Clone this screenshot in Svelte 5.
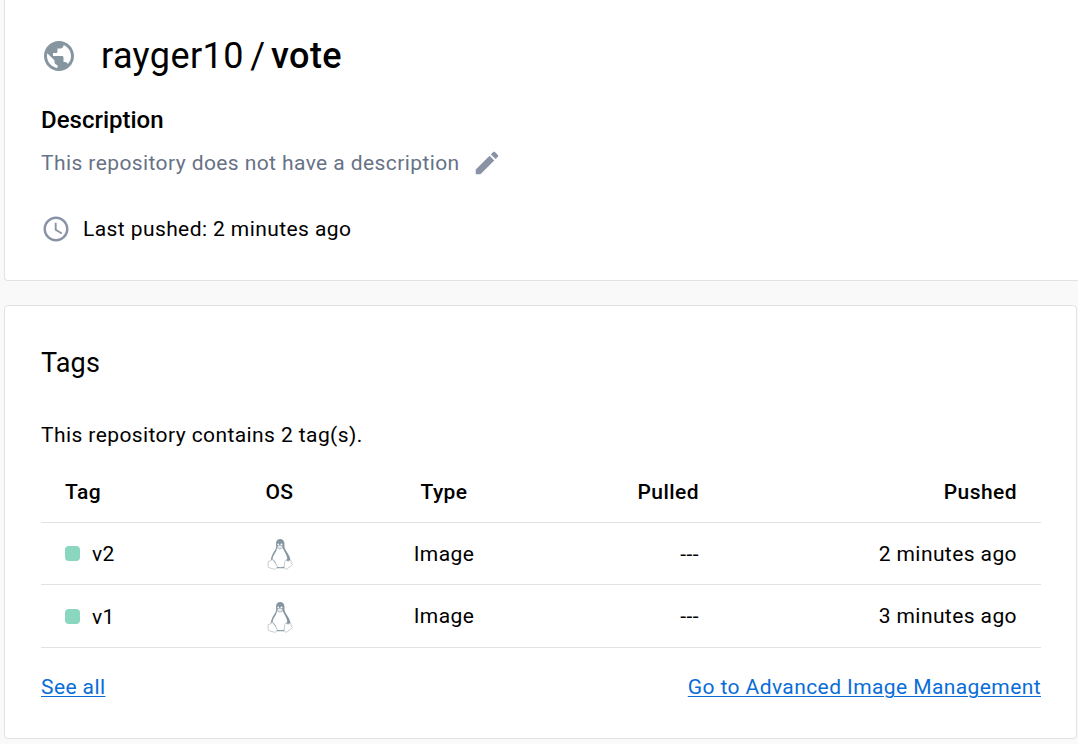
<script>
  const tags = [
    { name: 'v2', type: 'Image', pulled: '---', pushed: '2 minutes ago' },
    { name: 'v1', type: 'Image', pulled: '---', pushed: '3 minutes ago' }
  ];
</script>

<main>
  <section class="card summary">
    <h1>
      <svg class="globe" viewBox="0 0 24 24"><path d="M12 2C6.48 2 2 6.48 2 12s4.480 10 10 10 10-4.480 10-10S17.520 2 12 2zm-1 17.930c-3.950-.49-7-3.850-7-7.930 0-.62.08-1.210.21-1.790L9 15v1c0 1.100.9 2 2 2v1.930zm6.900-2.540c-.26-.81-1-1.390-1.900-1.390h-1v-3c0-.55-.45-1-1-1H8v-2h2c.55 0 1-.45 1-1V7h2c1.100 0 2-.9 2-2v-.41c2.930 1.190 5 4.060 5 7.410 0 2.080-.8 3.970-2.100 5.390z"/></svg>
      <span class="owner">rayger10</span><span class="slash">/</span><strong>vote</strong>
    </h1>
    <h2>Description</h2>
    <div class="description">
      <span>This repository does not have a description</span>
      <svg viewBox="0 0 24 24"><path d="M3 17.250V21h3.750L17.810 9.940l-3.750-3.750L3 17.250zM20.710 7.040c.39-.39.39-1.020 0-1.410l-2.340-2.340c-.39-.39-1.020-.39-1.410 0l-1.830 1.830 3.750 3.750 1.830-1.830z"/></svg>
    </div>
    <div class="pushed-line">
      <svg viewBox="0 0 24 24"><path d="M11.990 2C6.470 2 2 6.480 2 12s4.470 10 9.990 10C17.520 22 22 17.520 22 12S17.520 2 11.990 2zM12 20c-4.420 0-8-3.580-8-8s3.580-8 8-8 8 3.580 8 8-3.580 8-8 8z"/><path d="M12.500 7H11v6l5.250 3.150.75-1.230-4.500-2.670z"/></svg>
      <span>Last pushed: 2 minutes ago</span>
    </div>
  </section>

  <section class="card tags">
    <h3>Tags</h3>
    <p>This repository contains 2 tag(s).</p>
    <div class="table">
      <div class="row head">
        <span>Tag</span><span class="mid">OS</span><span class="mid">Type</span><span class="end">Pulled</span><span class="end">Pushed</span>
      </div>
      {#each tags as tag}
        <div class="row">
          <span class="name"><i></i>{tag.name}</span>
          <span class="mid">
            <svg class="tux" viewBox="0 0 26 32">
              <path class="coat" d="M13.200 1C10.600 1 9.100 2.800 9.100 5.200V9.500C8.500 12.300 5.300 15.200 4.300 19.500L3.600 22.500 8.500 28.500 10 30.300h7l1-2 5.400-5.200C23.600 18 19.400 14 17.900 10.500 17.200 9 17.700 6.700 17.300 4.500 16.900 2.200 15.400 1 13.200 1Z"/>
              <path class="belly" d="M10 10 12.800 11.500 15.800 10C17 13.500 20 16.500 20.300 21 18.300 21.800 18.100 25.800 17.200 28.800 15 29.300 11.500 29.300 9.800 28.800 9.500 24.800 7.800 22.400 5.600 21.300 6 16.500 9.600 14.300 10 10Z"/>
              <ellipse class="eye" cx="11.300" cy="6.500" rx=".8" ry=".9"/><ellipse class="eye" cx="14.500" cy="6.400" rx="1" ry=".9"/>
              <path class="beak" d="M10.300 8.400 12.700 7.200 15.600 8.300 15.200 9.700 12.800 10.900 10.500 9.700Z"/>
              <path class="foot" d="M1.200 23.600 3.500 23C4.200 21.800 5 21.300 6.300 22.200L9.800 27.500C10.700 29.500 9.700 31 7.500 31.300L1.600 29.500C.8 29 1.100 25.500 1.200 23.600Z"/>
              <path class="foot" d="M17.800 23.300C18.200 22.300 18.700 22 19.600 22.500 20.600 23.400 22 23.200 23.100 22L24 22.600 24.200 25 25.400 26.400C24.800 28 22.300 28.900 20.600 30.500 19.100 31.700 17 31 17.200 28.800Z"/>
            </svg>
          </span>
          <span class="mid">{tag.type}</span>
          <span class="end">{tag.pulled}</span>
          <span class="end">{tag.pushed}</span>
        </div>
      {/each}
    </div>
    <div class="links"><span class="link">See all</span><span class="link">Go to Advanced Image Management</span></div>
  </section>
</main>

<style>
  :global(body) { margin: 0; background: #f9f9f9; overflow: hidden; }
  main {
    box-sizing: border-box; width: 1078px; height: 744px; overflow: hidden;
    padding-left: 4px; display: flex; flex-direction: column; gap: 24px;
    font: 400 21px/30px Roboto, sans-serif; letter-spacing: 0.41px; color: #000;
  }
  h1, h2, h3, p { margin: 0; font-weight: 400; }
  svg { display: block; flex: none; fill: #8993a5; }
  .card { box-sizing: border-box; background: #fff; border: 1px solid #e1e2e6; border-radius: 4px; padding: 0 36px; }
  .summary { width: 1080px; height: 281px; border-top: 0; border-top-left-radius: 0; }
  .tags { width: 1073px; height: 434px; padding: 0 35px 0 36px; }
  h1 { display: flex; align-items: center; height: 48px; margin-top: 32px; font-size: 36px; letter-spacing: 0.4px; }
  .globe { width: 36px; height: 36px; fill: #8696a0; margin-right: 24px; }
  .slash { margin: 0 5.500px 0 6.500px; }
  strong { font-weight: 500; }
  h2 { font-size: 24px; font-weight: 500; letter-spacing: 0; margin-top: 25px; }
  .description { display: flex; align-items: center; gap: 12px; color: #677285; margin-top: 13px; }
  .description svg { width: 30px; height: 30px; }
  .pushed-line { display: flex; align-items: center; gap: 12px; margin-top: 36px; }
  .pushed-line svg { width: 30px; height: 30px; }
  h3 { font-size: 27px; margin-top: 42px; letter-spacing: 0.15px; }
  p { margin-top: 42px; }
  .table { margin-top: 12px; }
  .row {
    display: grid; grid-template-columns: 138px 153px 176px 167px 1fr; align-items: center;
    height: 62px; box-sizing: border-box; padding: 0 24px; border-bottom: 1px solid #e1e2e6;
  }
  .row:last-child { height: 63px; }
  .row:last-child .name, .row:last-child .tux { padding-top: 1px; }
  .head { font-weight: 500; height: 61px; letter-spacing: 0.45px; }
  .mid { display: flex; justify-content: center; }
  .end { text-align: right; }
  .name { display: flex; align-items: center; gap: 12px; }
  .name i { width: 15px; height: 15px; border-radius: 4px; background: #8ad6bf; }
  .tux { width: 26px; height: 32px; }
  .coat { fill: #8696a0; }
  .belly, .eye { fill: #fff; }
  .beak { fill: #e4e8ea; }
  .foot { fill: #fff; stroke: #b8c2c8; stroke-width: 0.8; }
  .links { display: flex; justify-content: space-between; margin-top: 24px; }
  .link { color: #086dd7; text-decoration: underline; text-decoration-thickness: 1px; text-underline-offset: 2px; }
</style>
